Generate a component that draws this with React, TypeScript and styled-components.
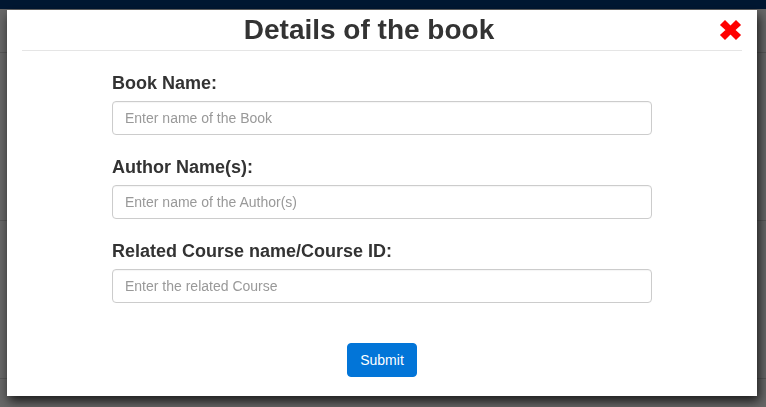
import React from "react";
import styled, { createGlobalStyle } from "styled-components";

const Global = createGlobalStyle`
  html, body { margin: 0; padding: 0; }
  body {
    width: 766px;
    height: 407px;
    overflow: hidden;
    font-family: "Liberation Sans", Arial, Helvetica, sans-serif;
    color: #333;
    background: #fff;
  }
  * { box-sizing: border-box; }
`;

const Page = styled.div`
  width: 766px;
  height: 407px;
  display: flex;
  flex-direction: column;
  background: #fff;
`;

const NavStripe = styled.div`
  height: 9px;
  background: #003a7c;
`;

const PageRule = styled.div<{ $top: number }>`
  margin-top: ${(p) => p.$top}px;
  height: 1px;
  background: #d8d8d8;
`;

const Overlay = styled.div`
  position: fixed;
  inset: 0;
  background: rgba(0, 0, 0, 0.6);
  padding: 10px 9px 0 7px;
`;

const Dialog = styled.div`
  width: 750px;
  height: 386px;
  background: #fff;
  box-shadow: 2px 5px 10px rgba(0, 0, 0, 0.75);
  display: flex;
  flex-direction: column;
`;

const Header = styled.div`
  margin: 0 15px;
  padding: 5px 0;
  border-bottom: 1px solid #e5e5e5;
  display: flex;
  align-items: center;
`;

const Title = styled.h4`
  flex: 1;
  margin: 0;
  text-align: center;
  font-size: 28px;
  line-height: 30px;
  font-weight: 700;
  color: #333;
`;

const CloseButton = styled.button`
  width: 25px;
  height: 24px;
  margin-left: 2px;
  margin-right: -1px;
  padding: 0;
  border: 0;
  background: transparent;
  display: flex;
  align-items: center;
  justify-content: center;
  cursor: pointer;
`;

const Body = styled.form`
  flex: 1;
  padding: 22px 0 0;
  display: flex;
  flex-direction: column;
  align-items: center;
`;

const Group = styled.div`
  width: 540px;
  display: flex;
  flex-direction: column;
  margin-bottom: 22px;
`;

const Label = styled.label`
  font-size: 18px;
  line-height: 20px;
  font-weight: 700;
  color: #333;
  margin-bottom: 8px;
`;

const Input = styled.input`
  width: 540px;
  height: 34px;
  padding: 6px 12px;
  border: 1px solid #ccc;
  border-radius: 4px;
  font-family: "Liberation Sans", Arial, sans-serif;
  font-size: 14px;
  color: #555;
  background: #fff;
  box-shadow: inset 0 1px 1px rgba(0, 0, 0, 0.04);
  outline: none;
  &::placeholder { color: #999; }
`;

const Submit = styled.button`
  margin-top: 18px;
  height: 34px;
  padding: 6px 12px;
  border: 1px solid #0275d8;
  border-radius: 4px;
  background: #0275d8;
  color: #fff;
  font-family: "Liberation Sans", Arial, sans-serif;
  font-size: 14px;
  line-height: 20px;
  cursor: pointer;
`;

const CloseIcon = () => (
  <svg width="25" height="24" viewBox="0 0 25 24">
    <path
      d="M3 7 L7 3 L12.5 8.5 L18 3 L22 7 L16.5 12 L22 17 L18 21 L12.5 15.5 L7 21 L3 17 L8.5 12 Z"
      fill="#ff0000"
      stroke="#ff0000"
      strokeWidth="1.5"
      strokeLinejoin="miter"
    />
  </svg>
);

const fields = [
  { label: "Book Name:", placeholder: "Enter name of the Book" },
  { label: "Author Name(s):", placeholder: "Enter name of the Author(s)" },
  { label: "Related Course name/Course ID:", placeholder: "Enter the related Course" },
];

export default function App() {
  return (
    <>
      <Global />
      <Page>
        <NavStripe />
        <PageRule $top={43} />
        <PageRule $top={167} />
        <PageRule $top={157} />
      </Page>
      <Overlay>
        <Dialog>
          <Header>
            <Title>Details of the book</Title>
            <CloseButton type="button" aria-label="Close">
              <CloseIcon />
            </CloseButton>
          </Header>
          <Body onSubmit={(e) => e.preventDefault()}>
            {fields.map((f) => (
              <Group key={f.label}>
                <Label>{f.label}</Label>
                <Input type="text" placeholder={f.placeholder} />
              </Group>
            ))}
            <Submit type="submit">Submit</Submit>
          </Body>
        </Dialog>
      </Overlay>
    </>
  );
}
